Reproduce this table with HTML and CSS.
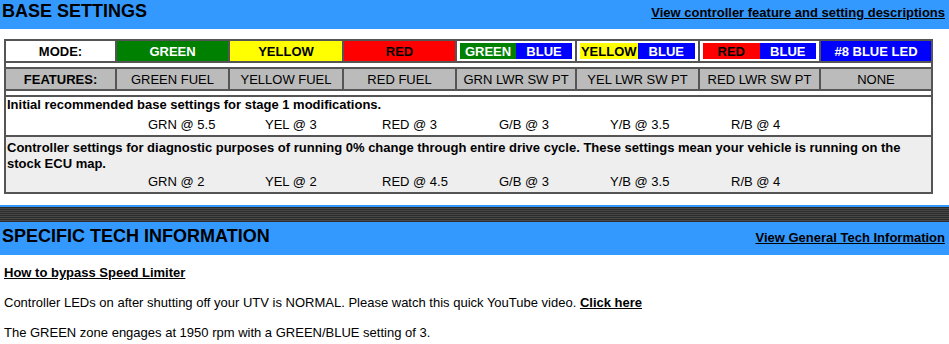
FILE: index.html
```html
<!DOCTYPE html>
<html>
<head>
<meta charset="utf-8">
<link rel="stylesheet" href="styles.css">
</head>
<body>
<div class="bar bar-top">
  <h2 class="bar-title">BASE SETTINGS</h2>
  <a class="bar-link" href="#">View controller feature and setting descriptions</a>
</div>

<table class="settings">
  <colgroup>
    <col class="c1"><col class="c2"><col class="c3"><col class="c4"><col class="c5"><col class="c6"><col class="c7"><col class="c8">
  </colgroup>
  <tr class="mode-row">
    <td class="label">MODE:</td>
    <td class="m-green">GREEN</td>
    <td class="m-yellow">YELLOW</td>
    <td class="m-red">RED</td>
    <td class="combo"><div class="pair"><span class="m-green">GREEN</span><span class="m-blue">BLUE</span></div></td>
    <td class="combo"><div class="pair"><span class="m-yellow">YELLOW</span><span class="m-blue">BLUE</span></div></td>
    <td class="combo"><div class="pair"><span class="m-red">RED</span><span class="m-blue">BLUE</span></div></td>
    <td class="m-blue">#8 BLUE LED</td>
  </tr>
  <tr class="spacer"><td colspan="8"></td></tr>
  <tr class="feat-row">
    <td class="label">FEATURES:</td>
    <td>GREEN FUEL</td>
    <td>YELLOW FUEL</td>
    <td>RED FUEL</td>
    <td>GRN LWR SW PT</td>
    <td>YEL LWR SW PT</td>
    <td>RED LWR SW PT</td>
    <td>NONE</td>
  </tr>
  <tr class="spacer"><td colspan="8"></td></tr>
  <tr class="note">
    <td colspan="8">
      <div class="note-text">Initial recommended base settings for stage 1 modifications.</div>
      <div class="vals">
        <span class="v1">GRN @ 5.5</span><span class="v2">YEL @ 3</span><span class="v3">RED @ 3</span><span class="v4">G/B @ 3</span><span class="v5">Y/B @ 3.5</span><span class="v6">R/B @ 4</span>
      </div>
    </td>
  </tr>
  <tr class="note note-alt">
    <td colspan="8">
      <div class="note-text">Controller settings for diagnostic purposes of running 0% change through entire drive cycle. These settings mean your vehicle is running on the stock ECU map.</div>
      <div class="vals">
        <span class="v1">GRN @ 2</span><span class="v2">YEL @ 2</span><span class="v3">RED @ 4.5</span><span class="v4">G/B @ 3</span><span class="v5">Y/B @ 3.5</span><span class="v6">R/B @ 4</span>
      </div>
    </td>
  </tr>
</table>

<div class="divider"></div>
<div class="bar bar-second">
  <h2 class="bar-title">SPECIFIC TECH INFORMATION</h2>
  <a class="bar-link" href="#">View General Tech Information</a>
</div>

<div class="content">
  <p><a class="strong-link" href="#">How to bypass Speed Limiter</a></p>
  <p>Controller LEDs on after shutting off your UTV is NORMAL. Please watch this quick YouTube video. <a class="strong-link" href="#">Click here</a></p>
  <p>The GREEN zone engages at 1950 rpm with a GREEN/BLUE setting of 3.</p>
</div>
</body>
</html>
```

FILE: styles.css
```css
html, body {
  margin: 0;
  padding: 0;
  background: #ffffff;
}
body {
  font-family: "Liberation Sans", Arial, sans-serif;
  font-size: 13px;
  color: #000;
}

.bar {
  background: #3399ff;
  display: flex;
  justify-content: space-between;
  align-items: baseline;
  padding: 0 4px 0 2px;
}
.bar-top {
  height: 29px;
  padding-top: 1px;
  box-sizing: border-box;
}
.bar-second {
  height: 33px;
  padding-top: 4px;
  box-sizing: border-box;
}
.bar-title {
  margin: 0;
  font-size: 18px;
  font-weight: bold;
  line-height: 21px;
}
.bar-link {
  color: #000;
  font-weight: bold;
  font-size: 13px;
  text-decoration: underline;
}

.settings {
  margin: 10px 0 0 4px;
  width: 928px;
  table-layout: fixed;
  border-collapse: separate;
  border-spacing: 0;
  border: 1px solid #555;
}
.c1 { width: 111px; }
.c2 { width: 113px; }
.c3 { width: 114px; }
.c4 { width: 113px; }
.c5 { width: 120px; }
.c6 { width: 123px; }
.c7 { width: 121px; }
.c8 { width: 112px; }

.settings td {
  border: 1px solid #555;
  padding: 0;
  text-align: center;
  line-height: 15px;
}
.mode-row td {
  height: 20px;
  font-weight: bold;
}
.feat-row td {
  height: 20px;
  background: #bbbbbb;
}
.label {
  font-weight: bold;
}
.spacer td {
  height: 4px;
  line-height: 0;
  font-size: 0;
}

.m-green { background: #008000; color: #fff; }
.m-yellow { background: #ffff00; color: #000; }
.m-red { background: #ff0000; color: #000; }
.m-blue { background: #0000ff; color: #fff; }

.settings td.combo {
  background: #fff;
  padding: 2px 3px;
  height: 16px;
}
.pair {
  display: flex;
  height: 16px;
}
.pair span {
  flex: 1;
  display: flex;
  align-items: center;
  justify-content: center;
}

.note td {
  text-align: left;
  padding: 0 1px 2px 1px;
  background: #fff;
  line-height: 16px;
}
.note-alt td {
  background: #eeeeee;
  padding-top: 3px;
  padding-bottom: 2px;
}
.note-text {
  font-weight: bold;
}
.vals {
  display: flex;
  padding-left: 141px;
  margin-top: 4px;
}
.note-alt .vals {
  margin-top: 2px;
}
.vals span { display: block; }
.v1, .v2, .v3 { width: 117px; }
.v4 { width: 111px; }
.v5 { width: 121px; }

.divider {
  margin-top: 11px;
  height: 15px;
  border-top: 2px solid #3399ff;
  background: repeating-linear-gradient(to bottom, #2c2c2c 0, #2c2c2c 1px, #474747 1px, #474747 2px);
}

.content {
  padding: 1px 4px 0 4px;
}
.content p {
  margin: 8px 0 13px 0;
  line-height: 17px;
}
.strong-link {
  color: #000;
  font-weight: bold;
  text-decoration: underline;
}
```
